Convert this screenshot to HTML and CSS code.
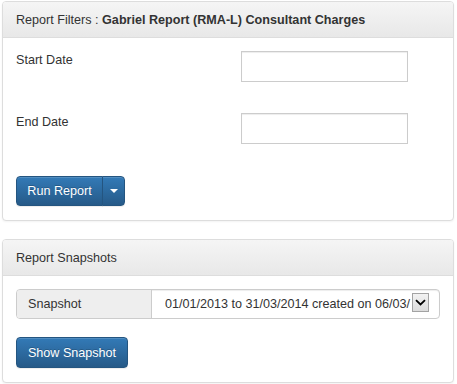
FILE: index.html
```html
<!DOCTYPE html>
<html>

<head>
    <title>Report Filters</title>
    <link rel="stylesheet" href="styles.css">
</head>

<body>
    <div class="panel">
        <div class="panel-heading">
            Report Filters : <strong>Gabriel Report (RMA-L) Consultant Charges</strong>
        </div>
        <div class="panel-body">
            <div class="form-row">
                <label for="start-date">Start Date</label>
                <input type="text" id="start-date" class="form-control">
            </div>
            <div class="form-row">
                <label for="end-date">End Date</label>
                <input type="text" id="end-date" class="form-control">
            </div>
            <div class="btn-group">
                <button class="btn btn-primary">Run Report</button>
                <button class="btn btn-primary btn-caret"><span class="caret"></span></button>
            </div>
        </div>
    </div>

    <div class="panel">
        <div class="panel-heading">Report Snapshots</div>
        <div class="panel-body">
            <div class="input-group">
                <span class="input-addon">Snapshot</span>
                <div class="select-box">
                    <span class="select-text">01/01/2013 to 31/03/2014 created on 06/03/</span>
                    <span class="select-arrow">
                        <svg width="11" height="7" viewBox="0 0 11 7">
                            <path d="M1 1.2 L5.5 5.5 L10 1.2" fill="none" stroke="#000" stroke-width="1.8" />
                        </svg>
                    </span>
                </div>
            </div>
            <button class="btn btn-primary btn-show">Show Snapshot</button>
        </div>
    </div>
</body>

</html>
```

FILE: styles.css
```css
body {
    margin: 0;
    padding: 1px 3px 0 2px;
    font-family: "Liberation Sans", Arial, sans-serif;
    font-size: 12.6px;
    line-height: 18px;
    color: #333;
    background-color: white;
}

.panel {
    width: 450px;
    border: 1px solid #ddd;
    border-radius: 4px;
    margin-bottom: 18px;
    background-color: white;
    box-shadow: 0 1px 2px rgba(0, 0, 0, 0.05);
}

.panel-heading {
    padding: 9px 13px 8px;
    border-bottom: 1px solid #ddd;
    border-radius: 3px 3px 0 0;
    background-image: linear-gradient(to bottom, #f5f5f5 0, #e8e8e8 100%);
}

.panel-body {
    padding: 13px 13px 14px;
}

.form-row {
    display: grid;
    grid-template-columns: 225px 167px;
    margin-bottom: 31px;
}

.form-row + .form-row {
    margin-bottom: 32px;
}

label {
    font-weight: normal;
}

.form-control {
    box-sizing: border-box;
    height: 31px;
    margin: 0;
    border: 1px solid #ccc;
    border-radius: 0;
    box-shadow: inset 0 1px 1px rgba(0, 0, 0, 0.075);
    font-family: inherit;
    font-size: 13px;
}

.btn-group {
    display: flex;
}

.btn {
    box-sizing: border-box;
    height: 30px;
    padding: 0 11px;
    font-family: inherit;
    font-size: inherit;
    line-height: 28px;
    white-space: nowrap;
    border-radius: 4px;
    cursor: pointer;
}

.btn-primary {
    color: white;
    border: 1px solid #245580;
    background-image: linear-gradient(to bottom, #337ab7 0, #265a88 100%);
    text-shadow: 0 -1px 0 rgba(0, 0, 0, 0.2);
    box-shadow: inset 0 1px 0 rgba(255, 255, 255, 0.15), 0 1px 1px rgba(0, 0, 0, 0.075);
}

.btn-show {
    width: 112px;
    height: 31px;
    padding: 0;
}

.btn-group .btn:first-child {
    border-radius: 4px 0 0 4px;
    width: 87px;
    padding: 0;
}

.btn-group .btn-caret {
    width: 23px;
    padding: 0;
    margin-left: -1px;
    border-radius: 0 4px 4px 0;
    display: flex;
    align-items: center;
    justify-content: center;
}

.caret {
    width: 0;
    height: 0;
    border-top: 4px solid white;
    border-left: 4px solid transparent;
    border-right: 4px solid transparent;
}

.input-group {
    display: flex;
    box-sizing: border-box;
    width: 424px;
    height: 30px;
    margin-bottom: 18px;
    border: 1px solid #ccc;
    border-radius: 4px;
    box-shadow: inset 0 1px 1px rgba(0, 0, 0, 0.075);
}

.input-addon {
    box-sizing: border-box;
    width: 135px;
    padding: 0 11px;
    line-height: 28px;
    background-color: #eee;
    border-right: 1px solid #ccc;
    border-radius: 3px 0 0 3px;
}

.select-box {
    flex: 1;
    display: flex;
    align-items: center;
    min-width: 0;
    padding: 0 10px 0 13px;
}

.select-text {
    flex: 1;
    overflow: hidden;
    white-space: nowrap;
    line-height: 28px;
}

.select-arrow {
    box-sizing: border-box;
    width: 17px;
    height: 19px;
    margin-left: 1px;
    margin-top: -3px;
    display: flex;
    align-items: center;
    justify-content: center;
    border: 1px solid #a3a3a3;
    background-image: linear-gradient(to bottom, #f2f2f2, #dcdcdc);
}
```
